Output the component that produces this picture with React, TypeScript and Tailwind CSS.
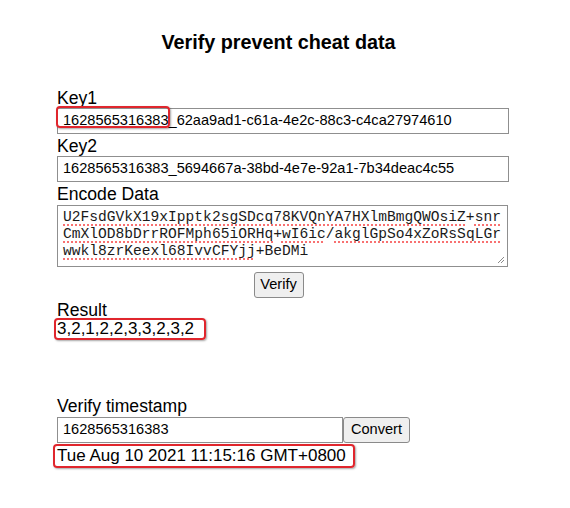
import React from 'react'

const KEY1 = '1628565316383_62aa9ad1-c61a-4e2c-88c3-c4ca27974610'
const KEY2 = '1628565316383_5694667a-38bd-4e7e-92a1-7b34deac4c55'
const TIMESTAMP = '1628565316383'

// spell-check style: [text, underlined]
const ENCODED: [string, boolean][][] = [
  [['U2FsdGVkX19xIpptk2sgSDcq78KVQnYA7HXlmBmgQWOsiZ', true], ['+', false], ['snr', true]],
  [['CmXlOD8bDrrROFMph65iORHq', true], ['+', false], ['wI6ic', true], ['/', false], ['akglGpSo4xZoRsSqLGr', true]],
  [['wwkl8zrKeexl68IvvCFYjj', true], ['+BeDMi', false]],
]

const label = 'block text-[17.6px] leading-[20px] text-black'
const field = 'h-[26px] border border-[#8f8f8f] bg-white pl-[5px] flex items-center text-[14.6px] text-black'
const button = 'h-[26px] border border-[#8a8a8a] bg-[#efefef] rounded-[3px] text-[14.6px] text-black flex items-center justify-center'
const marker = 'absolute border-[2.5px] border-[#e0262d] rounded-[4px] shadow-[1px_1px_2px_rgba(0,0,0,0.35)] pointer-events-none'

export default function App() {
  return (
    <div className="w-[557px] min-h-[508px] bg-white font-['Liberation_Sans',Arial,sans-serif] pt-[31px]">
      <h1 className="text-center text-[19.8px] leading-[23px] font-bold text-black">Verify prevent cheat data</h1>

      <div className="pl-[57px] mt-[34px]">
        <label className={label}>Key1</label>
        <div className="relative w-[452px]">
          <div className={field}>{KEY1}</div>
          <div className={`${marker} left-[-1px] top-[-2px] w-[114px] h-[22px]`} />
        </div>

        <label className={`${label} mt-[2px]`}>Key2</label>
        <div className={`${field} w-[452px]`}>{KEY2}</div>

        <label className={`${label} mt-[2px]`}>Encode Data</label>
        <div className="relative mt-[1px] w-[451px] h-[62px] border border-[#8f8f8f] bg-white pl-[5px] pt-[3px] font-['Liberation_Mono','Courier_New',monospace] text-[14.6px] leading-[17px] text-[#1a1a1a]">
          {ENCODED.map((line, i) => (
            <div key={i} className="whitespace-pre">
              {line.map(([t, u], j) => (
                <span key={j} className={u ? 'underline decoration-dotted decoration-[#f87171] decoration-2 underline-offset-[3px]' : ''}>{t}</span>
              ))}
            </div>
          ))}
          <svg className="absolute right-[2px] bottom-[2px]" width="8" height="8" viewBox="0 0 8 8">
            <path d="M7 1 L1 7 M7 4 L4 7" stroke="#8a8a8a" strokeWidth="1" fill="none" />
          </svg>
        </div>
      </div>

      <div className="flex justify-center mt-[5px]">
        <button className={`${button} w-[50px]`}>Verify</button>
      </div>

      <div className="pl-[57px]">
        <label className={`${label} mt-[2px]`}>Result</label>
        <div className="relative mt-[-1px] w-fit text-[17px] leading-[20px] text-black">
          3,2,1,2,2,3,3,2,3,2
          <div className={`${marker} left-[-3px] top-[-1px] w-[152px] h-[22px]`} />
        </div>

        <label className={`${label} mt-[57px]`}>Verify timestamp</label>
        <div className="flex mt-[1px]">
          <div className={`${field} w-[286px]`}>{TIMESTAMP}</div>
          <button className={`${button} w-[67px]`}>Convert</button>
        </div>
        <div className="relative mt-[3px] w-fit text-[17px] leading-[20px] text-black">
          Tue Aug 10 2021 11:15:16 GMT+0800
          <div className={`${marker} left-[-4px] top-[-2px] w-[302px] h-[24px]`} />
        </div>
      </div>
    </div>
  )
}
